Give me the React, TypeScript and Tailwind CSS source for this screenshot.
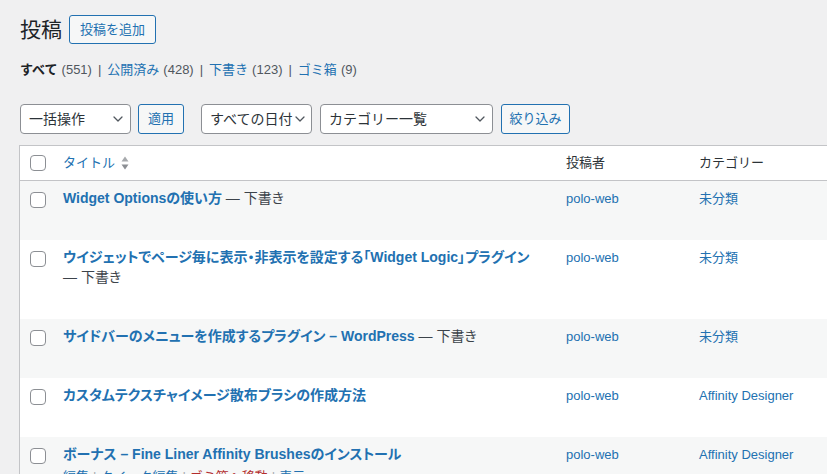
import React from 'react';

interface Post {
  id: number;
  title: string;
  draft: boolean;
  author: string;
  category: string;
  showActions?: boolean;
}

const posts: Post[] = [
  { id: 1, title: 'Widget Optionsの使い方', draft: true, author: 'polo-web', category: '未分類' },
  { id: 2, title: 'ウイジェットでページ毎に表示・非表示を設定する「Widget Logic」プラグイン', draft: true, author: 'polo-web', category: '未分類' },
  { id: 3, title: 'サイドバーのメニューを作成するプラグイン – WordPress', draft: true, author: 'polo-web', category: '未分類' },
  { id: 4, title: 'カスタムテクスチャイメージ散布ブラシの作成方法', draft: false, author: 'polo-web', category: 'Affinity Designer' },
  { id: 5, title: 'ボーナス – Fine Liner Affinity Brushesのインストール', draft: false, author: 'polo-web', category: 'Affinity Designer', showActions: true },
];

const Chevron = () => (
  <svg width="16" height="16" viewBox="0 0 20 20" fill="none" className="shrink-0">
    <path d="M5 7.5l5 5 5-5" stroke="#50575e" strokeWidth="1.6" strokeLinecap="round" strokeLinejoin="round" />
  </svg>
);

const Select = ({ label, width }: { label: string; width: string }) => (
  <div className={`flex items-center justify-between h-[30px] ${width} bg-white border border-[#8c8f94] rounded-[4px] pl-2 pr-1 text-[14px] text-[#2c3338] whitespace-nowrap`}>
    <span>{label}</span>
    <Chevron />
  </div>
);

const Button = ({ children, className = '' }: { children: React.ReactNode; className?: string }) => (
  <button className={`h-[30px] bg-[#f6f7f7] border border-[#2271b1] rounded-[3px] text-[13px] text-[#2271b1] whitespace-nowrap ${className}`}>
    {children}
  </button>
);

const Checkbox = () => (
  <span className="block w-4 h-4 bg-white border border-[#8c8f94] rounded-[4px]" />
);

const App: React.FC = () => {
  return (
    <div
      className="w-[827px] h-[474px] overflow-hidden bg-[#f0f0f1] text-[#3c434a]"
      style={{ fontFamily: '"Liberation Sans", "Noto Sans CJK JP", sans-serif' }}
    >
      <div className="pl-5 pt-[15px]">
        {/* heading */}
        <div className="flex items-center h-[29px]">
          <h1 className="text-[21px] text-[#1d2327] leading-none mr-[7px]">投稿</h1>
          <button className="h-[29px] px-[10px] bg-[#f6f7f7] border border-[#2271b1] rounded-[3px] text-[13px] text-[#2271b1] whitespace-nowrap">
            投稿を追加
          </button>
        </div>

        {/* status filters */}
        <div className="mt-4 h-5 leading-5 text-[13px] text-[#50575e] flex items-center whitespace-nowrap">
          <span className="text-[#1d2327] font-semibold">すべて</span>
          <span className="ml-1">(551)</span>
          <span className="mx-[6px]">|</span>
          <span className="text-[#2271b1]">公開済み</span>
          <span className="ml-1">(428)</span>
          <span className="mx-[6px]">|</span>
          <span className="text-[#2271b1]">下書き</span>
          <span className="ml-1">(123)</span>
          <span className="mx-[6px]">|</span>
          <span className="text-[#2271b1]">ゴミ箱</span>
          <span className="ml-1">(9)</span>
        </div>

        {/* tablenav */}
        <div className="mt-6 flex items-center">
          <Select label="一括操作" width="w-[111px]" />
          <Button className="ml-[7px] w-[46px]">適用</Button>
          <div className="ml-[17px]">
            <Select label="すべての日付" width="w-[111px]" />
          </div>
          <div className="ml-2">
            <Select label="カテゴリー一覧" width="w-[173px]" />
          </div>
          <Button className="ml-2 w-[69px]">絞り込み</Button>
        </div>

        {/* table */}
        <div className="mt-[11px] w-[1000px] -ml-px border-l border-t border-[#c3c4c7] bg-white">
          <div className="flex h-[35px] items-center border-b border-[#c3c4c7] text-[13px] text-[#2c3338]">
            <div className="w-[33px] pl-[10px] shrink-0">
              <Checkbox />
            </div>
            <div className="w-[503px] pl-[10px] shrink-0 flex items-center">
              <span className="text-[#2271b1]">タイトル</span>
              <svg width="8" height="16" viewBox="0 0 8 16" className="ml-[6px]">
                <path d="M4 1.5L7.5 6.5H0.5Z" fill="#a7aaad" />
                <path d="M4 14.5L7.5 9.5H0.5Z" fill="#8c8f94" />
              </svg>
            </div>
            <div className="w-[133px] pl-[10px] shrink-0">投稿者</div>
            <div className="w-[130px] pl-[10px] shrink-0">カテゴリー</div>
          </div>

          {posts.map((post, i) => (
            <div key={post.id} className={`flex items-start pt-2 pb-2 ${i % 2 === 0 ? 'bg-[#f6f7f7]' : 'bg-white'}`}>
              <div className="w-[33px] pl-[10px] pt-[3px] shrink-0">
                <Checkbox />
              </div>
              <div className="w-[503px] pl-[10px] pr-[10px] shrink-0">
                <div className="text-[14px] leading-[19.5px] [font-feature-settings:'palt']">
                  <span className="text-[#2271b1] font-semibold">{post.title}</span>
                  {post.draft && <span className="text-[#3c434a] whitespace-nowrap"> — 下書き</span>}
                </div>
                <div className={`pt-[2px] h-[23.5px] text-[13px] leading-[21px] ${post.showActions ? '' : 'invisible'}`}>
                  <span className="text-[#2271b1]">編集</span>
                  <span className="text-[#a7aaad] mx-1">|</span>
                  <span className="text-[#2271b1]">クイック編集</span>
                  <span className="text-[#a7aaad] mx-1">|</span>
                  <span className="text-[#b32d2e]">ゴミ箱へ移動</span>
                  <span className="text-[#a7aaad] mx-1">|</span>
                  <span className="text-[#2271b1]">表示</span>
                </div>
              </div>
              <div className="w-[133px] pl-[10px] shrink-0 text-[13px] leading-[19.5px] text-[#2271b1]">{post.author}</div>
              <div className="w-[130px] pl-[10px] shrink-0 text-[13px] leading-[19.5px] text-[#2271b1]">{post.category}</div>
            </div>
          ))}
        </div>
      </div>
    </div>
  );
};

export default App;
